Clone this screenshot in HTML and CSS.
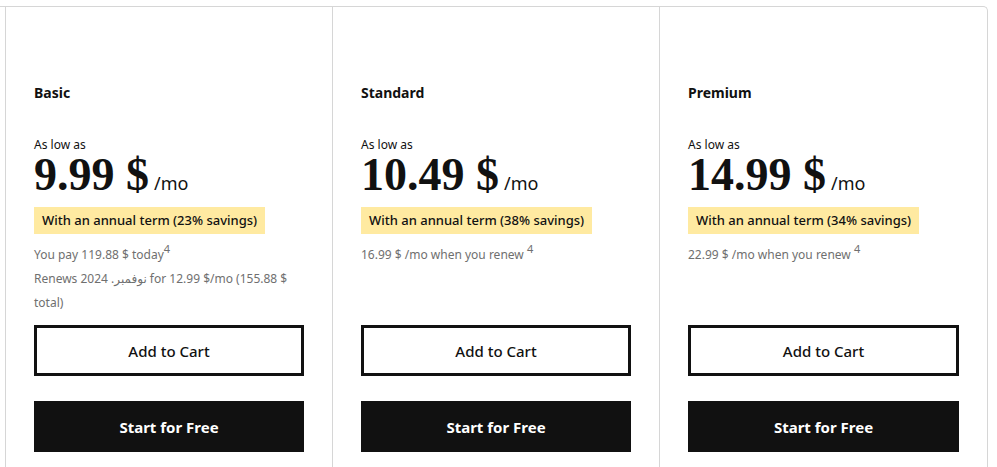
FILE: index.html
```html
<!DOCTYPE html>
<html lang="en">
<head>
<meta charset="utf-8">
<title>Plans</title>
<link rel="stylesheet" href="styles.css">
</head>
<body>
<div class="page">
  <div class="plans">
    <section class="plan">
      <h3 class="plan-name">Basic</h3>
      <div class="price-block">
        <div class="low">As low as</div>
        <div class="price"><span class="amount">9.99 $</span><span class="per">/mo</span></div>
      </div>
      <div class="badge">With an annual term (23% savings)</div>
      <div class="details">
        <p>You pay 119.88 $ today<sup>4</sup></p>
        <p>Renews <bdi>نوفمبر. 2024</bdi> for 12.99 $/mo (155.88 $ total)</p>
      </div>
      <div class="actions">
        <button class="btn btn-outline">Add to Cart</button>
        <button class="btn btn-solid">Start for Free</button>
      </div>
    </section>
    <section class="plan">
      <h3 class="plan-name">Standard</h3>
      <div class="price-block">
        <div class="low">As low as</div>
        <div class="price"><span class="amount">10.49 $</span><span class="per">/mo</span></div>
      </div>
      <div class="badge">With an annual term (38% savings)</div>
      <div class="details">
        <p>16.99 $ /mo when you renew <sup>4</sup></p>
      </div>
      <div class="actions">
        <button class="btn btn-outline">Add to Cart</button>
        <button class="btn btn-solid">Start for Free</button>
      </div>
    </section>
    <section class="plan">
      <h3 class="plan-name">Premium</h3>
      <div class="price-block">
        <div class="low">As low as</div>
        <div class="price"><span class="amount">14.99 $</span><span class="per">/mo</span></div>
      </div>
      <div class="badge">With an annual term (34% savings)</div>
      <div class="details">
        <p>22.99 $ /mo when you renew <sup>4</sup></p>
      </div>
      <div class="actions">
        <button class="btn btn-outline">Add to Cart</button>
        <button class="btn btn-solid">Start for Free</button>
      </div>
    </section>
  </div>
</div>
</body>
</html>
```
FILE: styles.css
```css
* { box-sizing: border-box; }
html, body { margin: 0; padding: 0; background: #fff; }
body {
  font-family: "Noto Sans", "Liberation Sans", "DejaVu Sans", sans-serif;
  color: #111;
  overflow: hidden;
}
.page { padding-top: 6px; }
.plans {
  width: 988px;
  padding-left: 5px;
  border-top: 1px solid #d6d6d6;
  border-right: 1px solid #d6d6d6;
  border-top-right-radius: 5px;
  display: grid;
  grid-template-columns: 327px 327px 1fr;
}
.plan {
  border-left: 1px solid #d6d6d6;
  padding: 76px 28px 40px 28px;
  display: flex;
  flex-direction: column;
}
.plan-name {
  margin: 0;
  font-size: 14px;
  line-height: 20px;
  font-weight: 700;
}
.price-block { margin-top: 34px; }
.low { font-size: 12px; line-height: 16px; }
.price { display: flex; align-items: baseline; }
.amount {
  font-family: "Liberation Serif", "Times New Roman", serif;
  font-weight: 700;
  font-size: 46px;
  line-height: 44px;
}
.per { font-size: 18px; margin-left: 5px; }
.badge {
  align-self: flex-start;
  margin-top: 10px;
  background: #ffeaa1;
  font-size: 13px;
  font-weight: 500;
  line-height: 19px;
  padding: 4px 8px;
}
.details {
  margin-top: 9px;
  flex: 1;
  color: #6f6f6f;
  font-size: 12px;
  line-height: 24px;
}
.details p { margin: 0; }
.details sup { font-size: 11px; line-height: 0; vertical-align: 6px; }
.actions {
  margin-top: 10px;
  display: flex;
  flex-direction: column;
  gap: 25px;
}
.btn {
  height: 51px;
  width: 100%;
  font-family: inherit;
  font-size: 15px;
  font-weight: 500;
  cursor: pointer;
}
.btn-outline { background: #fff; color: #111; border: 3px solid #111; }
.btn-solid { background: #111; color: #fff; border: none; font-weight: 700; }
```
